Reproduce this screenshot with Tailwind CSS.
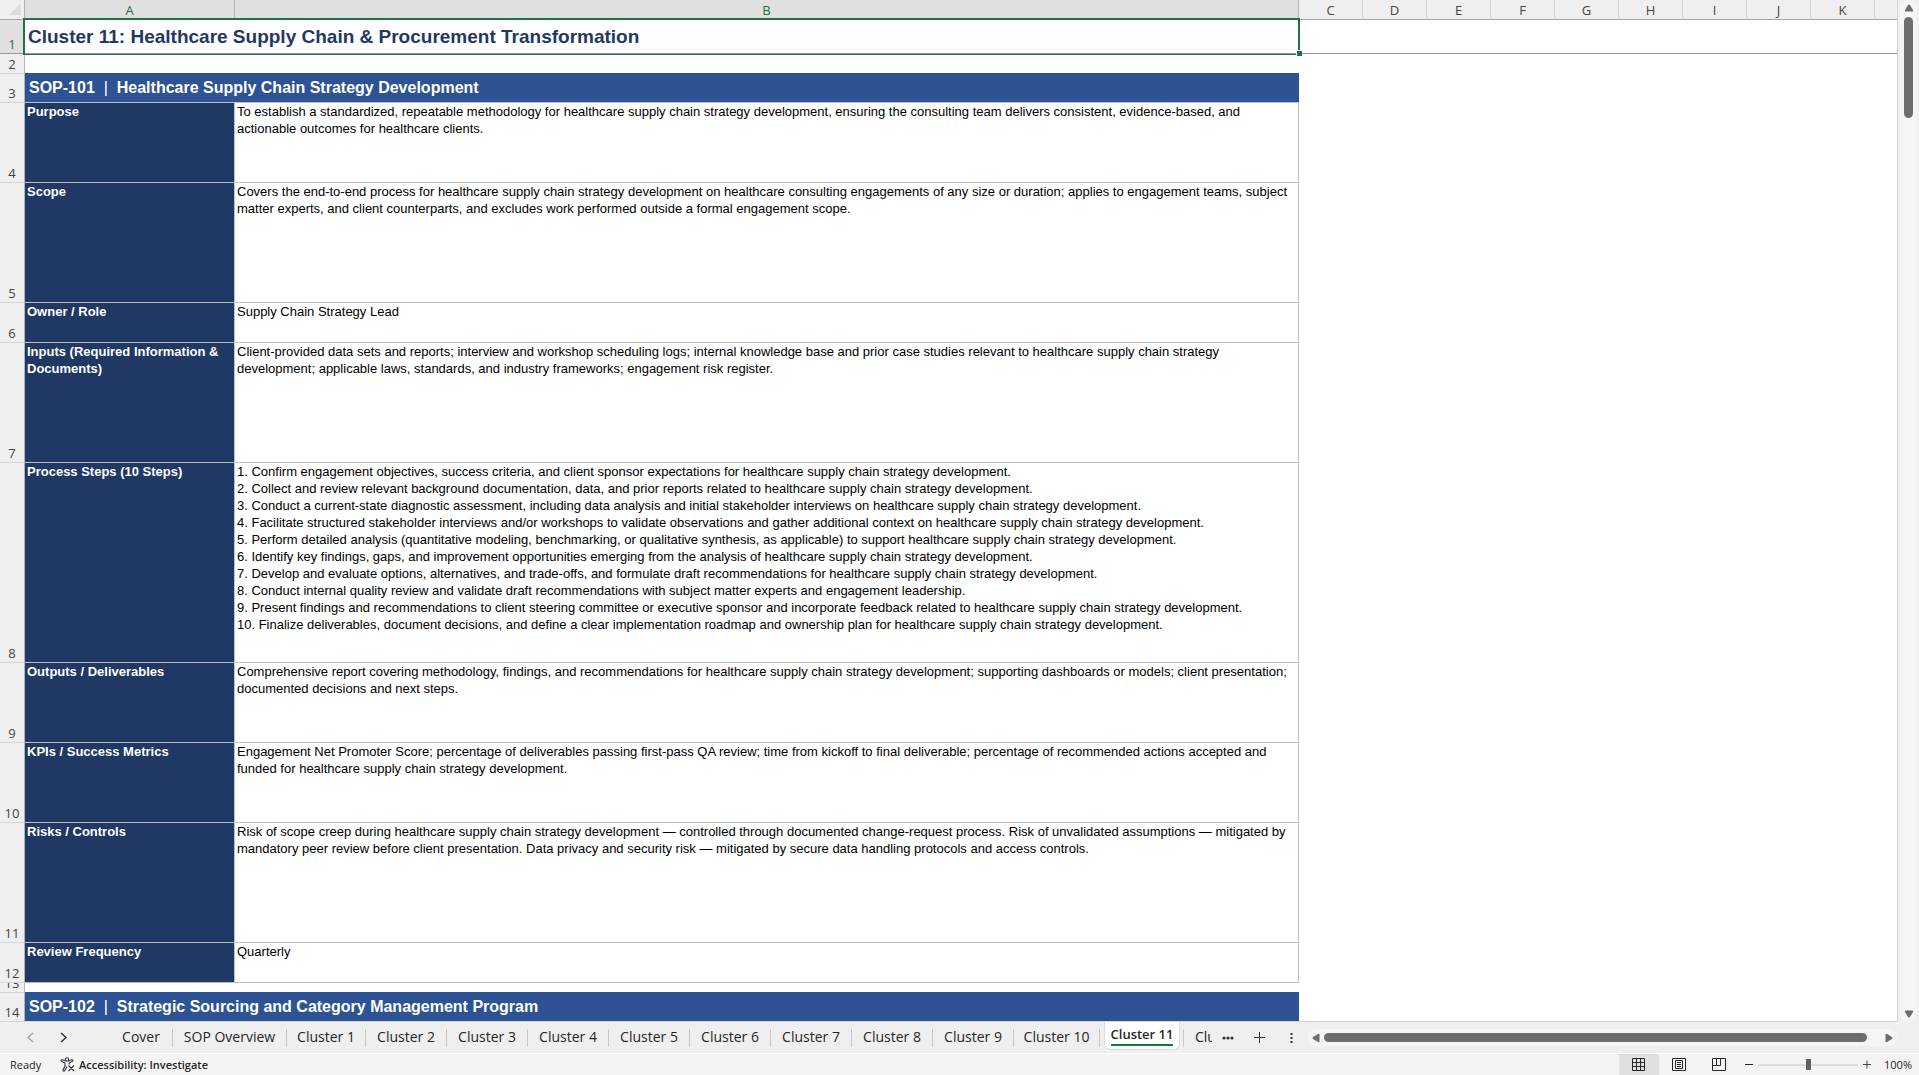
<!DOCTYPE html>
<html lang="en">
<head>
    <meta charset="UTF-8">
    <meta name="viewport" content="width=device-width, initial-scale=1.0">
    <title>Cluster 11</title>
    <script src="https://cdn.jsdelivr.net/npm/@tailwindcss/browser@4"></script>
</head>
<body class="h-screen flex flex-col overflow-hidden bg-[#efefef] font-['Open_Sans',sans-serif] text-[#262626]">
    <!-- Sheet area -->
    <main class="flex flex-1 min-h-0">
        <div class="flex-1 min-w-0 overflow-hidden bg-white border-r border-b border-[#d6d6d6]">
            <table class="table-fixed w-full border-separate border-spacing-0">
                <colgroup>
                    <col class="w-[25px]"><col class="w-[210px]"><col class="w-[1064px]">
                    <col class="w-16"><col class="w-16"><col class="w-16"><col class="w-16"><col class="w-16"><col class="w-16"><col class="w-16"><col class="w-16"><col class="w-16"><col>
                </colgroup>
                <thead class="text-[13px] leading-[18px] text-[#444]">
                    <tr class="h-5 bg-[#efefef] *:p-0 *:font-normal *:border-b *:border-b-[#a6a6a6]">
                        <td class="border-r border-r-[#b4b4b4]">
                            <svg class="block ml-2" width="14" height="14" viewBox="0 0 14 14"><path d="M13 0v12H1z" fill="#dcdcdc"/></svg>
                        </td>
                        <th class="border-r border-r-[#b4b4b4] bg-[#e0e0e0] text-[#217346]">A</th>
                        <th class="border-r border-r-[#b4b4b4] bg-[#e0e0e0] text-[#217346]">B</th>
                        <th class="border-r border-r-[#d4d4d4]">C</th>
                        <th class="border-r border-r-[#d4d4d4]">D</th>
                        <th class="border-r border-r-[#d4d4d4]">E</th>
                        <th class="border-r border-r-[#d4d4d4]">F</th>
                        <th class="border-r border-r-[#d4d4d4]">G</th>
                        <th class="border-r border-r-[#d4d4d4]">H</th>
                        <th class="border-r border-r-[#d4d4d4]">I</th>
                        <th class="border-r border-r-[#d4d4d4]">J</th>
                        <th class="border-r border-r-[#d4d4d4]">K</th>
                        <td></td>
                    </tr>
                </thead>
                <tbody class="font-['Liberation_Sans',sans-serif] text-[13px] leading-[17px] text-black">
                    <tr class="h-[34px]">
                        <th class="p-0 align-bottom border-r border-r-[#b4b4b4] border-b border-b-[#999] bg-[#e0e0e0] font-['Open_Sans',sans-serif] font-normal text-[#217346]">1</th>
                        <td colspan="2" class="relative p-0 pl-[3px] border-b border-[#999] text-[19px] leading-6 font-bold text-[#1f3864]">
                            Cluster 11: Healthcare Supply Chain &amp; Procurement Transformation
                            <span class="absolute -left-0.5 -right-px -top-0.5 -bottom-0.5 border-2 border-b border-[#217346]"></span>
                            <span class="absolute -right-[3px] -bottom-[3px] size-[6px] border-t border-l border-white bg-[#217346]"></span>
                        </td>
                        <td colspan="10" class="p-0 border-b border-[#999]"></td>
                    </tr>
                    <tr class="h-5">
                        <th class="p-0 align-bottom border-r border-r-[#b4b4b4] border-b border-b-[#d4d4d4] bg-[#efefef] font-['Open_Sans',sans-serif] font-normal text-[#444]">2</th>
                        <td colspan="2" class="p-0 border-b border-[#2d5394]"></td>
                    </tr>
                    <tr class="h-[29px]">
                        <th class="p-0 align-bottom border-r border-r-[#b4b4b4] border-b border-b-[#d4d4d4] bg-[#efefef] font-['Open_Sans',sans-serif] font-normal text-[#444]">3</th>
                        <td colspan="2" class="p-0 pl-1 border-b border-[#bfbfbf] bg-[#2d5394] text-[16px] leading-5 font-bold text-white whitespace-pre">SOP-101<span class="font-normal">  |  </span>Healthcare Supply Chain Strategy Development</td>
                    </tr>
                    <tr class="h-20">
                        <th class="p-0 align-bottom border-r border-r-[#b4b4b4] border-b border-b-[#d4d4d4] bg-[#efefef] font-['Open_Sans',sans-serif] font-normal text-[#444]">4</th>
                        <td class="p-0 pl-0.5 align-top border-r border-b border-[#bfbfbf] bg-[#203864] font-bold text-white">Purpose</td>
                        <td class="p-0 pl-0.5 align-top border-r border-b border-[#bfbfbf]">To establish a standardized, repeatable methodology for healthcare supply chain strategy development, ensuring the consulting team delivers consistent, evidence-based, and<br>actionable outcomes for healthcare clients.</td>
                    </tr>
                    <tr class="h-30">
                        <th class="p-0 align-bottom border-r border-r-[#b4b4b4] border-b border-b-[#d4d4d4] bg-[#efefef] font-['Open_Sans',sans-serif] font-normal text-[#444]">5</th>
                        <td class="p-0 pl-0.5 align-top border-r border-b border-[#bfbfbf] bg-[#203864] font-bold text-white">Scope</td>
                        <td class="p-0 pl-0.5 align-top border-r border-b border-[#bfbfbf]">Covers the end-to-end process for healthcare supply chain strategy development on healthcare consulting engagements of any size or duration; applies to engagement teams, subject<br>matter experts, and client counterparts, and excludes work performed outside a formal engagement scope.</td>
                    </tr>
                    <tr class="h-10">
                        <th class="p-0 align-bottom border-r border-r-[#b4b4b4] border-b border-b-[#d4d4d4] bg-[#efefef] font-['Open_Sans',sans-serif] font-normal text-[#444]">6</th>
                        <td class="p-0 pl-0.5 align-top border-r border-b border-[#bfbfbf] bg-[#203864] font-bold text-white">Owner / Role</td>
                        <td class="p-0 pl-0.5 align-top border-r border-b border-[#bfbfbf]">Supply Chain Strategy Lead</td>
                    </tr>
                    <tr class="h-30">
                        <th class="p-0 align-bottom border-r border-r-[#b4b4b4] border-b border-b-[#d4d4d4] bg-[#efefef] font-['Open_Sans',sans-serif] font-normal text-[#444]">7</th>
                        <td class="p-0 pl-0.5 align-top border-r border-b border-[#bfbfbf] bg-[#203864] font-bold text-white">Inputs (Required Information &amp;<br>Documents)</td>
                        <td class="p-0 pl-0.5 align-top border-r border-b border-[#bfbfbf]">Client-provided data sets and reports; interview and workshop scheduling logs; internal knowledge base and prior case studies relevant to healthcare supply chain strategy<br>development; applicable laws, standards, and industry frameworks; engagement risk register.</td>
                    </tr>
                    <tr class="h-50">
                        <th class="p-0 align-bottom border-r border-r-[#b4b4b4] border-b border-b-[#d4d4d4] bg-[#efefef] font-['Open_Sans',sans-serif] font-normal text-[#444]">8</th>
                        <td class="p-0 pl-0.5 align-top border-r border-b border-[#bfbfbf] bg-[#203864] font-bold text-white">Process Steps (10 Steps)</td>
                        <td class="p-0 pl-0.5 align-top border-r border-b border-[#bfbfbf]">
                            1. Confirm engagement objectives, success criteria, and client sponsor expectations for healthcare supply chain strategy development.<br>
                            2. Collect and review relevant background documentation, data, and prior reports related to healthcare supply chain strategy development.<br>
                            3. Conduct a current-state diagnostic assessment, including data analysis and initial stakeholder interviews on healthcare supply chain strategy development.<br>
                            4. Facilitate structured stakeholder interviews and/or workshops to validate observations and gather additional context on healthcare supply chain strategy development.<br>
                            5. Perform detailed analysis (quantitative modeling, benchmarking, or qualitative synthesis, as applicable) to support healthcare supply chain strategy development.<br>
                            6. Identify key findings, gaps, and improvement opportunities emerging from the analysis of healthcare supply chain strategy development.<br>
                            7. Develop and evaluate options, alternatives, and trade-offs, and formulate draft recommendations for healthcare supply chain strategy development.<br>
                            8. Conduct internal quality review and validate draft recommendations with subject matter experts and engagement leadership.<br>
                            9. Present findings and recommendations to client steering committee or executive sponsor and incorporate feedback related to healthcare supply chain strategy development.<br>
                            10. Finalize deliverables, document decisions, and define a clear implementation roadmap and ownership plan for healthcare supply chain strategy development.
                        </td>
                    </tr>
                    <tr class="h-20">
                        <th class="p-0 align-bottom border-r border-r-[#b4b4b4] border-b border-b-[#d4d4d4] bg-[#efefef] font-['Open_Sans',sans-serif] font-normal text-[#444]">9</th>
                        <td class="p-0 pl-0.5 align-top border-r border-b border-[#bfbfbf] bg-[#203864] font-bold text-white">Outputs / Deliverables</td>
                        <td class="p-0 pl-0.5 align-top border-r border-b border-[#bfbfbf]">Comprehensive report covering methodology, findings, and recommendations for healthcare supply chain strategy development; supporting dashboards or models; client presentation;<br>documented decisions and next steps.</td>
                    </tr>
                    <tr class="h-20">
                        <th class="p-0 align-bottom border-r border-r-[#b4b4b4] border-b border-b-[#d4d4d4] bg-[#efefef] font-['Open_Sans',sans-serif] font-normal text-[#444]">10</th>
                        <td class="p-0 pl-0.5 align-top border-r border-b border-[#bfbfbf] bg-[#203864] font-bold text-white">KPIs / Success Metrics</td>
                        <td class="p-0 pl-0.5 align-top border-r border-b border-[#bfbfbf]">Engagement Net Promoter Score; percentage of deliverables passing first-pass QA review; time from kickoff to final deliverable; percentage of recommended actions accepted and<br>funded for healthcare supply chain strategy development.</td>
                    </tr>
                    <tr class="h-30">
                        <th class="p-0 align-bottom border-r border-r-[#b4b4b4] border-b border-b-[#d4d4d4] bg-[#efefef] font-['Open_Sans',sans-serif] font-normal text-[#444]">11</th>
                        <td class="p-0 pl-0.5 align-top border-r border-b border-[#bfbfbf] bg-[#203864] font-bold text-white">Risks / Controls</td>
                        <td class="p-0 pl-0.5 align-top border-r border-b border-[#bfbfbf]">Risk of scope creep during healthcare supply chain strategy development — controlled through documented change-request process. Risk of unvalidated assumptions — mitigated by<br>mandatory peer review before client presentation. Data privacy and security risk — mitigated by secure data handling protocols and access controls.</td>
                    </tr>
                    <tr class="h-10">
                        <th class="p-0 align-bottom border-r border-r-[#b4b4b4] border-b border-b-[#d4d4d4] bg-[#efefef] font-['Open_Sans',sans-serif] font-normal text-[#444]">12</th>
                        <td class="p-0 pl-0.5 align-top border-r border-b border-[#bfbfbf] bg-[#203864] font-bold text-white">Review Frequency</td>
                        <td class="p-0 pl-0.5 align-top border-r border-b border-[#bfbfbf]">Quarterly</td>
                    </tr>
                    <tr class="h-2.5">
                        <th class="p-0 border-r border-r-[#b4b4b4] border-b border-b-[#d4d4d4] bg-[#efefef] font-['Open_Sans',sans-serif] font-normal text-[#444]">
                            <div class="flex h-[9px] items-end justify-center overflow-hidden">13</div>
                        </th>
                        <td colspan="2" class="p-0 border-b border-[#2d5394]"></td>
                    </tr>
                    <tr class="h-7">
                        <th class="p-0 align-bottom border-r border-r-[#b4b4b4] bg-[#efefef] font-['Open_Sans',sans-serif] font-normal text-[#444]">14</th>
                        <td colspan="2" class="p-0 pl-1 bg-[#2d5394] text-[16px] leading-5 font-bold text-white whitespace-pre">SOP-102<span class="font-normal">  |  </span>Strategic Sourcing and Category Management Program</td>
                    </tr>
                </tbody>
            </table>
        </div>

        <!-- Vertical scrollbar -->
        <div class="w-[21px] flex justify-center">
            <div class="w-[17px] flex flex-col items-center rounded-lg bg-[#f5f5f5] pt-1 pb-1">
                <svg width="10" height="8" viewBox="0 0 10 8"><path d="M4 1q1-1 2 0l3 5q.5 1.500-.5 1.500h-7Q.5 7.500 1 6z" fill="#6e6e6e"/></svg>
                <div class="mt-[5px] w-[9px] h-[101px] rounded-full bg-[#6e6e6e]"></div>
                <svg class="mt-auto" width="10" height="8" viewBox="0 0 10 8"><path d="M4 7q1 1 2 0l3-5q.5-1.500-.5-1.500h-7Q.5.5 1 2z" fill="#6e6e6e"/></svg>
            </div>
        </div>
    </main>

    <!-- Sheet tabs -->
    <nav class="flex items-center h-[31px] text-[14px] leading-4">
        <div class="flex items-center w-[110px] pl-[25px] gap-[22px]">
            <button type="button" aria-label="Previous sheet"><svg width="11" height="12" viewBox="0 0 11 12" fill="none" stroke="#a0a0a0" stroke-width="1.300"><path d="M8 1 3 5.500 8 10"/></svg></button>
            <button type="button" aria-label="Next sheet"><svg width="11" height="12" viewBox="0 0 11 12" fill="none" stroke="#333" stroke-width="1.400"><path d="M3 1l5 4.500L3 10"/></svg></button>
        </div>
        <div class="flex items-center text-center *:h-[18px] *:leading-4 *:border-r *:border-[#c8c8c8]">
            <a href="#" class="w-[63px]">Cover</a>
            <a href="#" class="w-[114px]">SOP Overview</a>
            <a href="#" class="w-[79px]">Cluster 1</a>
            <a href="#" class="w-[81px]">Cluster 2</a>
            <a href="#" class="w-[81px]">Cluster 3</a>
            <a href="#" class="w-[81px]">Cluster 4</a>
            <a href="#" class="w-[81px]">Cluster 5</a>
            <a href="#" class="w-[81px]">Cluster 6</a>
            <a href="#" class="w-[81px]">Cluster 7</a>
            <a href="#" class="w-[81px]">Cluster 8</a>
            <a href="#" class="w-[81px]">Cluster 9</a>
            <a href="#" class="w-[86px]">Cluster 10</a>
        </div>
        <a href="#" aria-current="page" class="self-start ml-1 w-[76px] h-7 pt-0.5 flex justify-center rounded-b-md border-b border-x border-[#dcdcdc] bg-white text-[13px] leading-5 font-semibold">
            <span class="h-[22px] border-b-2 border-[#107c41]">Cluster 11</span>
        </a>
        <div class="ml-[3px] h-[18px] border-l border-[#c8c8c8]"></div>
        <a href="#" class="ml-[11px] w-[17px] h-[18px] overflow-hidden whitespace-nowrap">Cluster 12</a>
        <button type="button" aria-label="More sheets" class="ml-2.5"><svg width="12" height="4" viewBox="0 0 12 4" fill="#333"><circle cx="2" cy="2" r="1.600"/><circle cx="6" cy="2" r="1.600"/><circle cx="10" cy="2" r="1.600"/></svg></button>
        <button type="button" aria-label="New sheet" class="ml-[19px]"><svg width="12" height="12" viewBox="0 0 12 12" stroke="#333"><path d="M6.500 0v11M1 5.500h11"/></svg></button>
        <svg class="ml-[25px]" width="3" height="12" viewBox="0 0 3 12" fill="#333"><path d="M.5 1h2v2h-2zM.5 5h2v2h-2zM.5 9h2v2h-2z"/></svg>
        <!-- Horizontal scrollbar -->
        <div class="flex flex-1 items-center h-[17px] ml-[15px] mr-[22px] px-1 rounded-lg bg-[#f5f5f5]">
            <svg width="8" height="10" viewBox="0 0 8 10"><path d="M1 4q-1 1 0 2l5 3q1.500.5 1.500-.5v-7Q7.500.5 6 1z" fill="#6e6e6e"/></svg>
            <div class="flex-1 ml-1 mr-[18px] h-[9px] rounded-full bg-[#6e6e6e]"></div>
            <svg width="8" height="10" viewBox="0 0 8 10"><path d="M7 4q1 1 0 2L2 9Q.5 9.500.5 8.500v-7Q.5.500 2 1z" fill="#6e6e6e"/></svg>
        </div>
    </nav>

    <!-- Status bar -->
    <footer class="flex items-center h-[22px] pl-2.5 pr-[7px] border-t border-white bg-[#f4f4f4] text-[11px] leading-4">
        <span class="w-[50px]">Ready</span>
        <button type="button" class="flex items-center gap-1 font-semibold">
            <svg width="15" height="15" viewBox="0 0 15 15" fill="none" stroke="#333" stroke-width="1.100"><circle cx="7" cy="2.500" r="1.700"/><path d="M5.500 4 2.300 2.800q-1.300-.2-1.300.8 0 .6.8 1L5 6v3L3 13q-.1 1 .8 1.200.6 0 .9-.6L7 9.500M8.500 4l3.200-1.200q1.300-.2 1.300.8 0 .6-.8 1L9 6v1.500M8.500 8.500l5.500 5.500M14 8.500 8.500 14"/></svg>
            Accessibility: Investigate
        </button>
        <div class="flex items-center h-full ml-auto *:h-full *:w-10 *:flex *:items-center *:justify-center">
            <button type="button" aria-label="Normal" class="bg-[#e0e0e0]"><svg width="14" height="14" viewBox="0 0 14 14" fill="none" stroke="#262626"><path d="M.5.5h12v12H.5zM4.500.5v12M8.500.5v12M.5 4.500h12M.5 8.500h12"/></svg></button>
            <button type="button" aria-label="Page Layout"><svg width="14" height="14" viewBox="0 0 14 14" fill="none" stroke="#262626"><path d="M.5.5h13v12H.5zM3.500 2.500h7v8h-7zM5 4.500h4M5 6.500h4M5 8.500h4"/></svg></button>
            <button type="button" aria-label="Page Break Preview"><svg width="14" height="14" viewBox="0 0 14 14" fill="none" stroke="#262626"><path d="M.5.5h13v12H.5zM.5 7.500h8v-7M4.500.5v7"/></svg></button>
        </div>
        <button type="button" aria-label="Zoom out" class="ml-[5px]"><svg width="10" height="10" viewBox="0 0 10 10" stroke="#262626"><path d="M1 4.500h8"/></svg></button>
        <input type="range" aria-label="Zoom" min="0" max="100" value="50" class="mx-1 w-[100px] h-3 appearance-none bg-linear-to-b from-transparent from-45% via-[#666] via-50% to-transparent to-55% [&::-webkit-slider-thumb]:appearance-none [&::-webkit-slider-thumb]:w-[5px] [&::-webkit-slider-thumb]:h-[11px] [&::-webkit-slider-thumb]:bg-[#606060]">
        <button type="button" aria-label="Zoom in"><svg width="10" height="10" viewBox="0 0 10 10" stroke="#444"><path d="M1 4.500h8M5 .5v8"/></svg></button>
        <span class="ml-3">100%</span>
    </footer>
</body>
</html>
